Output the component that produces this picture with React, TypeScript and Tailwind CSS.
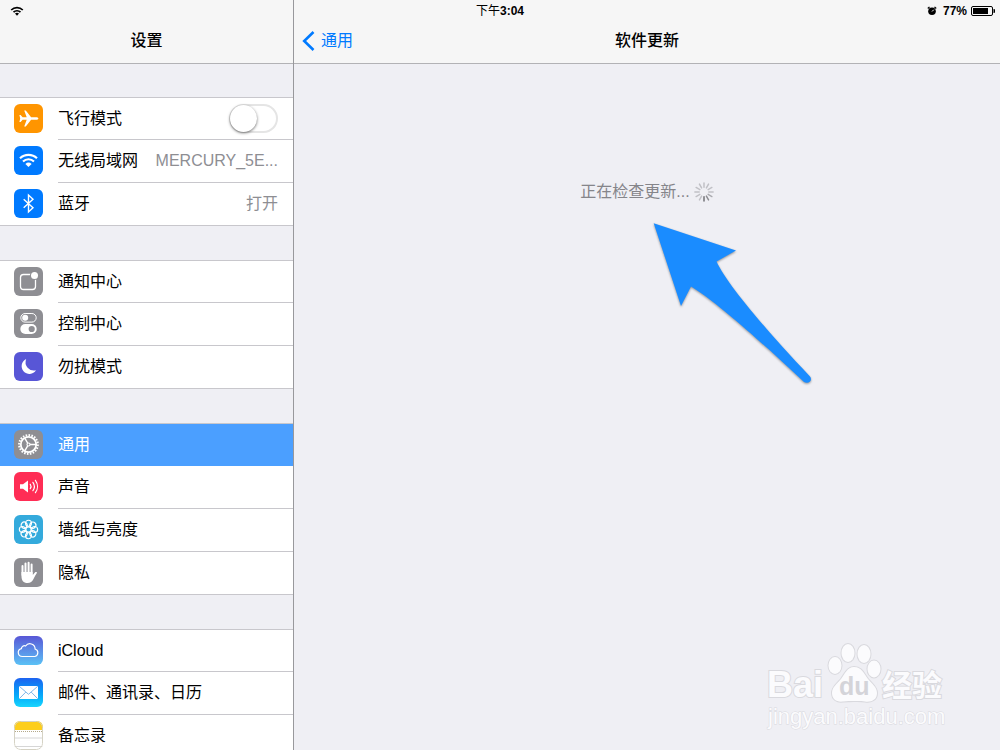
import type { ReactNode } from "react";
import clsx from "clsx";

type SettingsItem = {
  id: string;
  label: string;
  icon: ReactNode;
  tile: string;
  value?: string;
  toggle?: boolean;
  active?: boolean;
};

const AirplaneIcon = () => (
  <svg viewBox="0 0 29 29" className="size-full" fill="#fff">
    <path d="M24.400 14.500c0-.8-1.200-1.300-2.600-1.300h-4.700L11.800 6.500h-1.600l2.500 6.700H8.600L6.600 11H5.400l.8 3.500-.8 3.500h1.200l2-2.200h4.100l-2.500 6.700h1.600l5.300-6.700h4.700c1.400 0 2.600-.5 2.600-1.300z" />
  </svg>
);

const WifiIcon = () => (
  <svg
    viewBox="0 0 29 29"
    className="size-full"
    fill="none"
    stroke="#fff"
    strokeWidth="2.1"
  >
    <path d="M6 12.300a12.200 12.200 0 0 1 17 0" />
    <path d="M9 15.500a7.900 7.900 0 0 1 11 0" />
    <path
      d="M11.400 17.900a4.500 4.500 0 0 1 6.200 0L14.500 21z"
      fill="#fff"
      stroke="none"
    />
  </svg>
);

const BluetoothIcon = () => (
  <svg
    viewBox="0 0 29 29"
    className="size-full"
    fill="none"
    stroke="#fff"
    strokeWidth="1.4"
  >
    <path d="M9.700 10.200l9.300 8.600-4.500 4.200V6l4.500 4.200-9.300 8.600" />
  </svg>
);

const NotificationIcon = () => (
  <svg viewBox="0 0 29 29" className="size-full">
    <rect
      x="6.500"
      y="7.500"
      width="15"
      height="15"
      rx="3"
      fill="none"
      stroke="#fff"
      strokeWidth="1.3"
    />
    <circle cx="20.500" cy="8.500" r="4.600" fill="#8e8e93" />
    <circle cx="20.500" cy="8.500" r="3.500" fill="#fff" />
  </svg>
);

const ControlCenterIcon = () => (
  <svg viewBox="0 0 29 29" className="size-full">
    <rect
      x="6.800"
      y="4.500"
      width="15.400"
      height="8.600"
      rx="4.300"
      fill="none"
      stroke="#fff"
      strokeWidth="1"
    />
    <circle cx="11.200" cy="8.800" r="3" fill="#fff" />
    <rect x="6.300" y="15" width="16.400" height="10" rx="5" fill="#fff" />
    <circle cx="17.700" cy="20" r="3.100" fill="#8e8e93" />
  </svg>
);

const MoonIcon = () => (
  <svg viewBox="0 0 29 29" className="size-full" fill="#fff">
    <path d="M12.200 7a7.800 7.800 0 1 0 9.800 11.300A8.400 8.400 0 0 1 12.200 7z" />
  </svg>
);

const GearIcon = () => (
  <svg
    viewBox="0 0 29 29"
    className="size-full"
    fill="none"
    stroke="#fff"
    strokeWidth="1.800"
  >
    <circle cx="14.500" cy="14.500" r="7.700" />
    <circle
      cx="14.500"
      cy="14.500"
      r="9.300"
      strokeWidth="2.200"
      pathLength="80"
      strokeDasharray="2.200 1.800"
    />
    <circle cx="14.500" cy="14.500" r="1.500" strokeWidth="1.200" />
    <path
      strokeWidth="1.400"
      d="M16 14.500h6.200M13.700 13.200l-3.100-5.400M13.700 15.800l-3.100 5.400"
    />
  </svg>
);

const SoundIcon = () => (
  <svg
    viewBox="0 0 29 29"
    className="size-full"
    fill="none"
    stroke="#fff"
    strokeWidth="1.200"
    strokeLinecap="round"
  >
    <path
      fill="#fff"
      stroke="none"
      d="M6 12.200h3l5-3.700v12l-5-3.700H6z"
    />
    <path d="M16.300 12.300a4 4 0 0 1 0 4.400M18.900 10.300a7.200 7.200 0 0 1 0 8.400M21.400 8.300a10.500 10.500 0 0 1 0 12.400" />
  </svg>
);

const WallpaperIcon = () => (
  <svg
    viewBox="0 0 29 29"
    className="size-full"
    fill="none"
    stroke="#fff"
    strokeWidth="1.100"
  >
    <circle cx="14.500" cy="14.500" r="2.600" />
    {[0, 45, 90, 135, 180, 225, 270, 315].map((angle) => (
      <circle
        key={angle}
        cx="14.500"
        cy="8.300"
        r="3"
        transform={`rotate(${angle} 14.500 14.500)`}
      />
    ))}
  </svg>
);

const HandIcon = () => (
  <svg
    viewBox="0 0 29 29"
    className="size-full"
    fill="none"
    stroke="#fff"
    strokeWidth="2"
    strokeLinecap="round"
  >
    <path d="M8.500 8v9M11.500 5.500V16M14.600 4.800V16M17.600 6.500V17" />
    <path
      fill="#fff"
      stroke="none"
      d="M7.500 14h11.100v3.200l2.300-2.600c.7-.8 1.700-.6 2.300 0-1.300 1.800-2.500 4.300-3.700 6.500-1.300 2.500-3 3.900-5.900 3.900-4.200 0-6.100-2.700-6.100-6.500z"
    />
  </svg>
);

const CloudIcon = () => (
  <svg
    viewBox="0 0 29 29"
    className="size-full"
    fill="none"
    stroke="#fff"
    strokeWidth="1.200"
  >
    <path d="M8.300 20.500a4 4 0 0 1-.9-7.900 3 3 0 0 1 4.200-2.600 5.200 5.200 0 0 1 9.500 3 3.900 3.900 0 0 1-.2 7.500z" />
  </svg>
);

const MailIcon = () => (
  <svg viewBox="0 0 29 29" className="size-full">
    <rect x="5" y="8" width="19" height="13" rx="1" fill="#fff" />
    <path
      d="M5.300 8.300l9.200 8 9.200-8M5.300 20.700l6.500-6.600M23.700 20.700l-6.500-6.600"
      fill="none"
      stroke="#7fb8ea"
      strokeWidth="1"
    />
  </svg>
);

const NotesIcon = () => (
  <svg viewBox="0 0 29 29" className="size-full" fill="none">
    <path d="M0 0h29v9H0z" fill="#fdce1c" />
    <path d="M1 10.500h27" stroke="#b5a98a" strokeDasharray="1 1" />
    <path d="M0 17h29M0 25.500h29" stroke="#d6d6d6" />
    <rect x=".5" y=".5" width="28" height="28" rx="6" stroke="#d5d2c4" />
  </svg>
);

const groups: SettingsItem[][] = [
  [
    {
      id: "airplane",
      label: "飞行模式",
      icon: <AirplaneIcon />,
      tile: "bg-[#ff9500]",
      toggle: true,
    },
    {
      id: "wifi",
      label: "无线局域网",
      icon: <WifiIcon />,
      tile: "bg-[#007aff]",
      value: "MERCURY_5E...",
    },
    {
      id: "bluetooth",
      label: "蓝牙",
      icon: <BluetoothIcon />,
      tile: "bg-[#007aff]",
      value: "打开",
    },
  ],
  [
    {
      id: "notifications",
      label: "通知中心",
      icon: <NotificationIcon />,
      tile: "bg-[#8e8e93]",
    },
    {
      id: "control",
      label: "控制中心",
      icon: <ControlCenterIcon />,
      tile: "bg-[#8e8e93]",
    },
    {
      id: "dnd",
      label: "勿扰模式",
      icon: <MoonIcon />,
      tile: "bg-[#5856d6]",
    },
  ],
  [
    {
      id: "general",
      label: "通用",
      icon: <GearIcon />,
      tile: "bg-[#8e8e93]",
      active: true,
    },
    {
      id: "sounds",
      label: "声音",
      icon: <SoundIcon />,
      tile: "bg-[#ff2d55]",
    },
    {
      id: "wallpaper",
      label: "墙纸与亮度",
      icon: <WallpaperIcon />,
      tile: "bg-[#34aadc]",
    },
    {
      id: "privacy",
      label: "隐私",
      icon: <HandIcon />,
      tile: "bg-[#8e8e93]",
    },
  ],
  [
    {
      id: "icloud",
      label: "iCloud",
      icon: <CloudIcon />,
      tile: "bg-linear-to-b from-[#5856d6] to-[#5ac1f5]",
    },
    {
      id: "mail",
      label: "邮件、通讯录、日历",
      icon: <MailIcon />,
      tile: "bg-linear-to-b from-[#1d62f0] to-[#19d5fd]",
    },
    {
      id: "notes",
      label: "备忘录",
      icon: <NotesIcon />,
      tile: "bg-white",
    },
  ],
];

const StatusBar = () => (
  <div className="absolute inset-x-0 top-0 z-10 grid h-[21px] grid-cols-3 items-center px-1 text-xs font-bold text-black">
    <svg
      viewBox="0 0 14 10"
      className="ml-1.5 h-2.5 w-3.5"
      fill="none"
      stroke="#000"
      strokeWidth="1.700"
    >
      <path d="M1.200 4a8.200 8.200 0 0 1 11.600 0M3.500 6.200a5 5 0 0 1 7 0" />
      <path
        d="M5 7.600a2.900 2.900 0 0 1 4 0L7 9.700z"
        fill="#000"
        stroke="none"
      />
    </svg>
    <p className="text-center">
      <span className="font-normal">下午</span>3:04
    </p>
    <div className="flex items-center justify-end gap-1">
      <svg viewBox="0 0 10 10" className="mr-0.5 size-2.5">
        <circle cx="5" cy="5.300" r="3.800" fill="#000" />
        <path
          d="M.8 2.500L2.500.9M9.200 2.500L7.500.9"
          stroke="#000"
          strokeWidth="1.300"
        />
        <path d="M5 5.500l1.800-1.800" fill="none" stroke="#fff" strokeWidth="1" />
      </svg>
      <span>77%</span>
      <svg viewBox="0 0 25 10" className="h-2.5 w-[25px]">
        <rect
          x=".5"
          y=".5"
          width="21"
          height="9"
          rx="1.500"
          fill="none"
          stroke="#000"
        />
        <rect x="2" y="2" width="15" height="6" fill="#000" />
        <path d="M22.500 3h.5a1 1 0 0 1 1 1v2a1 1 0 0 1-1 1h-.5z" />
      </svg>
    </div>
  </div>
);

const SettingsRow = ({ item }: { item: SettingsItem }) => {
  const content = (
    <>
      <span
        className={clsx(
          "mb-0.5 size-[29px] shrink-0 overflow-hidden rounded-md",
          item.tile,
        )}
      >
        {item.icon}
      </span>
      <span
        className={clsx(
          "flex h-full min-w-0 grow items-center justify-between gap-2.5 border-b pr-[15px] whitespace-nowrap",
          item.active ? "border-[#4b9fff]" : "border-[#c8c7cc]",
          "group-last:border-transparent",
        )}
      >
        <span className={item.active ? "text-white" : "text-black"}>
          {item.label}
        </span>
        {item.value && <span className="text-[#8e8e93]">{item.value}</span>}
        {item.toggle && (
          <input
            id={item.id}
            type="checkbox"
            role="switch"
            className="h-[29px] w-[49px] appearance-none rounded-full border-2 border-[#e5e5e5] bg-white before:-mt-px before:-ml-px before:block before:size-[27px] before:rounded-full before:bg-white before:shadow-[0_1px_3px_rgba(0,0,0,0.55)]"
          />
        )}
      </span>
    </>
  );

  const rowClass = "flex h-full w-full items-center gap-[15px] pl-3.5 text-left";

  return (
    <li
      className={clsx(
        "group h-[43px] first:h-[42px]",
        item.active && "bg-[#4b9fff]",
      )}
    >
      {item.toggle ? (
        <label htmlFor={item.id} className={rowClass}>
          {content}
        </label>
      ) : (
        <button type="button" className={rowClass}>
          {content}
        </button>
      )}
    </li>
  );
};

const Spinner = () => (
  <svg
    viewBox="0 0 20 20"
    className="size-5"
    strokeWidth="1.500"
    strokeLinecap="round"
  >
    {Array.from({ length: 12 }, (_, i) => (
      <path
        key={i}
        d="M10 .9v4.300"
        stroke="#6b6b70"
        opacity={i > 3 && i < 7 ? 0.3 + (i - 3) * 0.22 : 0.35}
        transform={`rotate(${i * 30} 10 10)`}
      />
    ))}
  </svg>
);

const Arrow = () => (
  <svg
    viewBox="0 0 160 162"
    className="absolute top-[222px] left-[358px] h-[162px] w-[160px] drop-shadow-[0_1px_1px_rgba(0,0,0,0.4)]"
    fill="#1a8cff"
  >
    <path d="M1.700 1.200L84 28.500 64.500 39.500C75 62 113 107 158 154.500c3 4-1.500 8-6 5.500C117 127 65 80 39 64.500L29 84z" />
  </svg>
);

const Watermark = () => (
  <svg
    viewBox="0 0 190 90"
    className="absolute right-[54px] bottom-[20px] h-[90px] w-[190px]"
    fill="#fbfbfd"
    stroke="#d9d9de"
    strokeWidth="2"
    paintOrder="stroke"
  >
    <ellipse cx="79" cy="25.500" rx="6.500" ry="8.500" />
    <ellipse cx="92" cy="13" rx="6.500" ry="9" />
    <ellipse cx="108" cy="14" rx="6.500" ry="9" />
    <ellipse cx="118" cy="29" rx="6.500" ry="8.500" />
    <path d="M98 27c8 0 10 7 14 12s9 8 9 14c0 7-6 9.500-12 8.500-4-.7-7-.5-11-.5s-7 0-11 .5c-6 .8-11-2-11-8.500 0-6 5-9 9-14s6-12 13-12z" />
    <text x="11" y="57" fontSize="36" fontWeight="700">
      Bai
    </text>
    <text x="83" y="55" fontSize="25" fontWeight="700" fill="#d4d4d9" stroke="none">
      du
    </text>
    <text x="126" y="56" fontSize="30" fontWeight="700">
      经验
    </text>
    <text x="12" y="84" fontSize="22" strokeWidth="1">
      jingyan.baidu.com
    </text>
  </svg>
);

const App = () => {
  return (
    <div className="relative flex h-screen overflow-hidden bg-[#efeff4] font-['Liberation_Sans','Noto_Sans_CJK_SC',sans-serif] text-base leading-6">
      <StatusBar />

      <aside className="flex w-[294px] shrink-0 flex-col border-r border-[#98989c]">
        <header className="flex h-[64px] shrink-0 items-end justify-center border-b border-[#b2b2b5] bg-[#f6f6f6] pb-2.5">
          <h1 className="font-medium">设置</h1>
        </header>
        <nav className="flex min-h-0 grow flex-col gap-[34px] overflow-hidden pt-[33px]">
          {groups.map((items) => (
            <ul
              key={items[0].id}
              className="shrink-0 border-y border-[#c8c7cc] bg-white [&>li:last-child]:h-[42px]"
            >
              {items.map((item) => (
                <SettingsRow key={item.id} item={item} />
              ))}
            </ul>
          ))}
        </nav>
      </aside>

      <main className="relative flex min-w-0 grow flex-col">
        <header className="grid h-[64px] shrink-0 grid-cols-[1fr_auto_1fr] items-end border-b border-[#b2b2b5] bg-[#f6f6f6] px-2 pb-2.5">
          <a href="#general" className="flex items-center gap-1.5 text-[#007aff]">
            <svg
              viewBox="0 0 13 20"
              className="h-5 w-[13px]"
              fill="none"
              stroke="currentColor"
              strokeWidth="2.600"
            >
              <path d="M11.500 1L2.200 10l9.300 9" />
            </svg>
            通用
          </a>
          <h2 className="font-medium">软件更新</h2>
        </header>
        <p
          role="status"
          className="flex items-center justify-center gap-1 pt-[116px] text-[#85858a]"
        >
          正在检查更新...
          <Spinner />
        </p>
        <Arrow />
        <Watermark />
      </main>
    </div>
  );
};

export default App;
